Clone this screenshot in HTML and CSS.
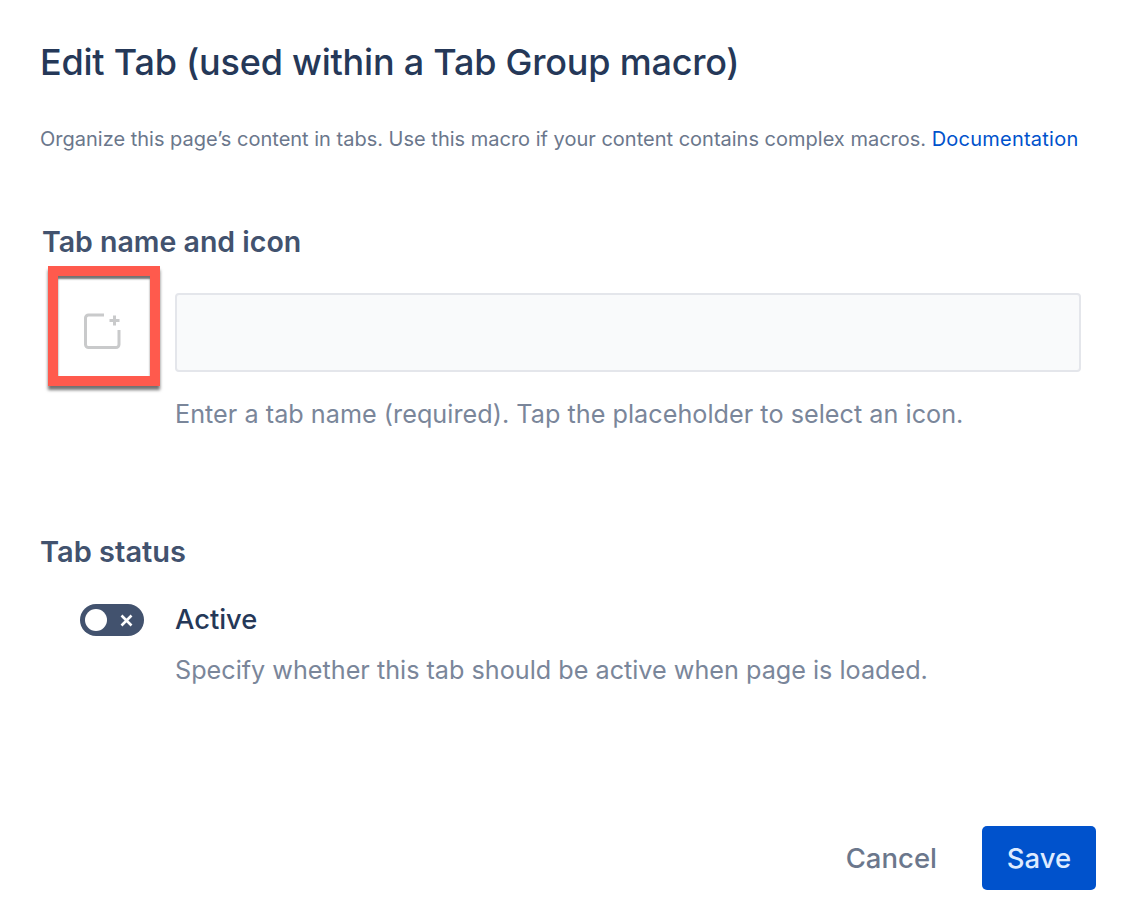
FILE: index.html
```html
<!DOCTYPE html>
<html lang="en">
<head>
<meta charset="UTF-8">
<title>Edit Tab</title>
<link rel="stylesheet" href="styles.css">
</head>
<body>

<div class="dialog">
    <h1 class="title">Edit Tab (used within a Tab Group macro)</h1>
    <p class="intro">Organize this page’s content in tabs. Use this macro if your content contains complex macros. <a href="#" class="doc-link">Documentation</a></p>

    <h2 class="section-name">Tab name and icon</h2>
    <div class="name-row">
        <div class="icon-box">
            <svg width="38" height="38" viewBox="0 0 38 38" fill="none" stroke="#c9cacb" stroke-width="3">
                <path d="M21 3H5.500A3 3 0 0 0 2.500 6V32.500A3 3 0 0 0 5.500 35.500H33A3 3 0 0 0 36 32.500V18"/>
                <path d="M31.500 3.500V13.500M26.500 8.500H36.500"/>
            </svg>
        </div>
        <div class="name-field">
            <div class="name-input"></div>
            <p class="hint">Enter a tab name (required). Tap the placeholder to select an icon.</p>
        </div>
    </div>

    <h2 class="section-status">Tab status</h2>
    <div class="status-row">
        <div class="toggle">
            <span class="toggle-knob"></span>
            <svg width="13" height="13" viewBox="0 0 13 13" stroke="#fff" stroke-width="2.600">
                <path d="M1.500 1.500L11.500 11.500M11.500 1.500L1.500 11.500"/>
            </svg>
        </div>
        <div class="status-text">
            <div class="status-label">Active</div>
            <p class="hint">Specify whether this tab should be active when page is loaded.</p>
        </div>
    </div>

    <div class="actions">
        <button class="btn-cancel">Cancel</button>
        <button class="btn-save">Save</button>
    </div>
</div>

</body>
</html>
```
FILE: styles.css
```css
body {
    margin: 0;
    background: #fff;
    font-family: 'Inter', sans-serif;
    color: #253858;
}
.dialog {
    height: 922px;
    box-sizing: border-box;
    padding: 38px 40px 0 40px;
    overflow: hidden;
}
.title {
    margin: 0;
    font-size: 36px;
    line-height: 48px;
    font-weight: 500;
    letter-spacing: -0.22px;
    color: #253858;
}
.intro {
    margin: 40px 0 0 0;
    font-size: 20px;
    line-height: 26px;
    color: #6b778c;
    white-space: nowrap;
}
.doc-link {
    color: #0052cc;
    letter-spacing: 0.23px;
    text-decoration: none;
}
.section-name {
    margin: 73px 0 0 2px;
    font-size: 28.500px;
    line-height: 34px;
    font-weight: 600;
    color: #42526e;
}
.name-row {
    display: flex;
    margin-top: 7px;
    margin-left: 8px;
}
.icon-box {
    width: 92px;
    height: 100px;
    border: 10px solid #ff5a4d;
    box-shadow: 0 4px 3px rgba(0,0,0,0.55), inset 0 3px 2px rgba(0,0,0,0.55);
    display: flex;
    align-items: center;
    justify-content: center;
    flex-shrink: 0;
}
.icon-box svg {
    margin-left: -4px;
    margin-top: 10px;
}
.name-field {
    margin-left: 15px;
    margin-top: 27px;
    flex: 1;
}
.name-input {
    width: 906px;
    height: 79px;
    box-sizing: border-box;
    border: 2px solid #e4e6eb;
    border-radius: 4px;
    background: #f9fafb;
}
.hint {
    margin: 0;
    font-size: 25.200px;
    line-height: 34px;
    color: #7a869a;
    white-space: nowrap;
}
.name-field .hint {
    margin-top: 25px;
    letter-spacing: 0.03px;
}
.section-status {
    margin: 104px 0 0 0;
    font-size: 29px;
    line-height: 34px;
    font-weight: 600;
    color: #42526e;
}
.status-row {
    display: flex;
    margin-top: 34px;
    margin-left: 40px;
}
.toggle {
    width: 64px;
    height: 32px;
    box-sizing: border-box;
    margin-top: 1px;
    padding: 0 11px 0 5px;
    border-radius: 16px;
    background: #42526e;
    display: flex;
    align-items: center;
    justify-content: space-between;
}
.toggle-knob {
    width: 22px;
    height: 22px;
    border-radius: 50%;
    background: #fff;
}
.status-text {
    margin-left: 31px;
}
.status-label {
    font-size: 27.300px;
    line-height: 34px;
    font-weight: 500;
    color: #253858;
}
.status-text .hint {
    margin-top: 16px;
}
.actions {
    display: flex;
    justify-content: flex-end;
    align-items: center;
    gap: 45px;
    margin-top: 139px;
}
.btn-cancel, .btn-save {
    font-family: 'Inter', sans-serif;
    font-size: 27.500px;
    font-weight: 500;
    border: none;
    padding: 0;
}
.btn-cancel {
    background: none;
    color: #6b778c;
}
.btn-save {
    width: 114px;
    height: 64px;
    border-radius: 5px;
    background: #0052cc;
    color: #deebff;
}
```
